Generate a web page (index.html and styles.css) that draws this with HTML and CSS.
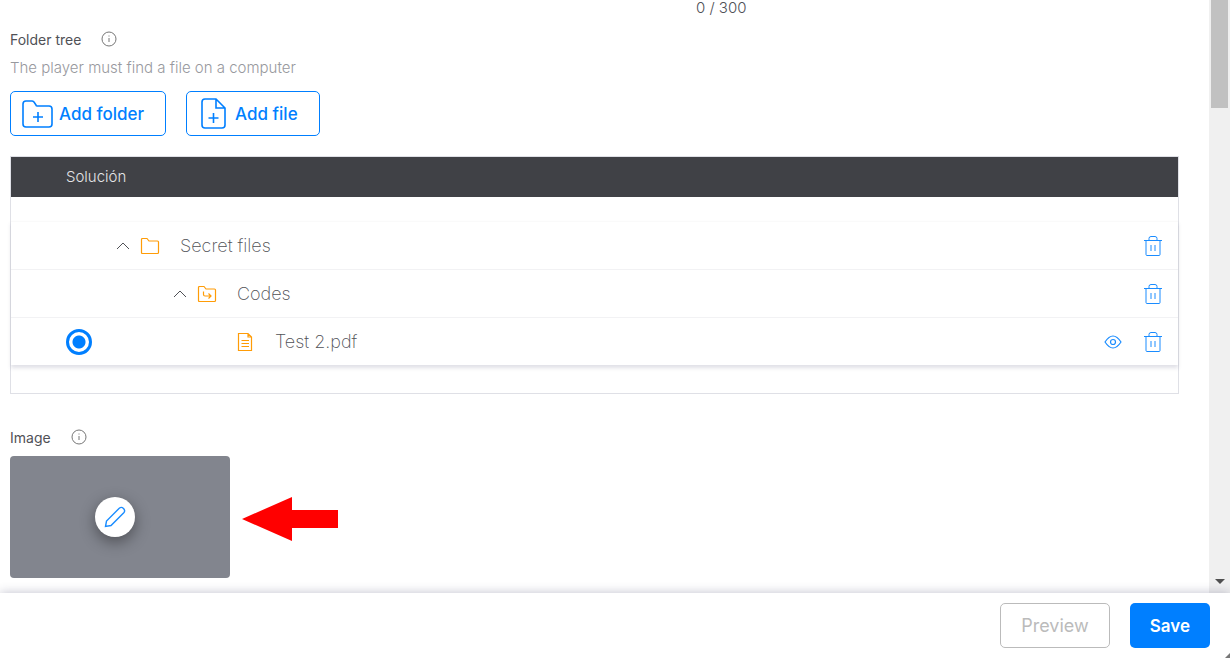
FILE: index.html
```html
<!DOCTYPE html>
<html lang="en">
<head>
  <meta charset="UTF-8">
  <title>Folder tree</title>
  <link rel="stylesheet" href="styles.css">
</head>
<body>

<svg class="sprite" aria-hidden="true">
  <symbol id="icon-info" viewBox="0 0 16 16">
    <circle cx="8" cy="8" r="7"/>
    <path d="M8 7v4M8 4.500v1"/>
  </symbol>
  <symbol id="icon-trash" viewBox="0 0 20 22">
    <path d="M1 5.500h18M3 5.500v14q0 1 1 1h12q1 0 1-1v-14M6 5V3.500q0-2 2-2h4q2 0 2 2V5M8 10v6M12 10v6"/>
  </symbol>
  <symbol id="icon-up" viewBox="0 0 14 8">
    <path d="M1 7l6-6 6 6"/>
  </symbol>
</svg>

<main class="editor">
  <div class="content">
    <div class="counter">0 / 300</div>

    <div class="field-title">
      <span>Folder tree</span>
      <svg class="info"><use href="#icon-info"/></svg>
    </div>
    <p class="hint">The player must find a file on a computer</p>

    <div class="tools">
      <button type="button" class="btn btn-outline">
        <svg class="btn-icon" viewBox="0 0 32 32">
          <path d="M1 6q0-3 3-3h6q1 0 2 1l2 3q0 1 1 1h12q3 0 3 3v15q0 3-3 3H4q-3 0-3-3zM16 14v10M11 19h10"/>
        </svg>
        Add folder
      </button>
      <button type="button" class="btn btn-outline">
        <svg class="btn-icon" viewBox="0 0 32 32">
          <path d="M7 1h11l9 9v17q0 3-3 3H7q-3 0-3-3V4q0-3 3-3zM18 1v9h9M15.500 15v10M10.500 20h10"/>
        </svg>
        Add file
      </button>
    </div>

    <section class="tree">
      <div class="tree-head">Solución</div>
      <ul class="tree-list">
        <li class="tree-row level-1">
          <button type="button" class="icon-btn toggle" aria-label="Collapse Secret files"><svg class="chevron"><use href="#icon-up"/></svg></button>
          <svg class="node-icon" viewBox="0 0 20 20">
            <path d="M1.500 3.500q0-1 1-1h4.500l2 2.500h8.500q1 0 1 1v10.500q0 1-1 1h-15q-1 0-1-1z"/>
          </svg>
          <span class="name">Secret files</span>
          <button type="button" class="icon-btn" aria-label="Delete Secret files"><svg class="trash"><use href="#icon-trash"/></svg></button>
        </li>
        <li class="tree-row level-2">
          <button type="button" class="icon-btn toggle" aria-label="Collapse Codes"><svg class="chevron"><use href="#icon-up"/></svg></button>
          <svg class="node-icon" viewBox="0 0 20 20">
            <path d="M1.500 3.500q0-1 1-1h4.500l2 2.500h8.500q1 0 1 1v10.500q0 1-1 1h-15q-1 0-1-1zM6.500 7.500v3q0 1.500 1.500 1.500h6M11.500 9.500l2.500 2.500-2.500 2.500"/>
          </svg>
          <span class="name">Codes</span>
          <button type="button" class="icon-btn" aria-label="Delete Codes"><svg class="trash"><use href="#icon-trash"/></svg></button>
        </li>
        <li class="tree-row level-3">
          <input type="radio" class="solution" name="solution" id="test2" checked>
          <svg class="node-icon" viewBox="0 0 20 20">
            <path d="M3.500 1.500h9.500l3.500 3.500v13.500h-13zM13 1.500v3.500h3.500M6.500 8.500h7.500M6.500 11.500h7.500M6.500 14.500h7.500"/>
          </svg>
          <label class="name" for="test2">Test 2.pdf</label>
          <button type="button" class="icon-btn" aria-label="View Test 2.pdf">
            <svg class="eye" viewBox="0 0 18 14">
              <path d="M1 7q8-12 16 0q-8 12-16 0z"/>
              <circle cx="9" cy="7" r="2.500"/>
            </svg>
          </button>
          <button type="button" class="icon-btn" aria-label="Delete Test 2.pdf"><svg class="trash"><use href="#icon-trash"/></svg></button>
        </li>
      </ul>
    </section>

    <div class="field-title">
      <span>Image</span>
      <svg class="info"><use href="#icon-info"/></svg>
    </div>
    <div class="image-row">
      <div class="image-box">
        <button type="button" class="edit" aria-label="Edit image">
          <svg class="pencil" viewBox="0 0 22 22">
            <path d="M1.500 20.500l1-5.500L15.500 2q2-1.500 4 .5t.5 4L7 19.500z"/>
          </svg>
        </button>
      </div>
      <svg class="arrow" viewBox="0 0 96 48">
        <path d="M0 26L50 4v13h46v18H50v13z"/>
      </svg>
    </div>
  </div>

  <div class="scrollbar">
    <div class="thumb"></div>
    <svg class="scroll-down" viewBox="0 0 10 5"><path d="M0 0h10L5 5z"/></svg>
  </div>
</main>

<footer class="actions">
  <button type="button" class="btn btn-preview">Preview</button>
  <button type="button" class="btn btn-save">Save</button>
  <svg class="grip" viewBox="0 0 5 5"><path d="M5 0v5H0z"/></svg>
</footer>

</body>
</html>
```
FILE: styles.css
```css
* {
  box-sizing: border-box;
}

body {
  margin: 0;
  height: 100vh;
  display: flex;
  flex-direction: column;
  overflow: hidden;
  background: white;
  color: #505156;
  font-family: Inter, sans-serif;
}

svg {
  display: block;
  flex: none;
  fill: none;
  stroke: currentColor;
}

.sprite {
  position: absolute;
  width: 0;
  height: 0;
}

.editor {
  flex: 1;
  min-height: 0;
  display: flex;
}

.content {
  flex: 1;
  padding: 0 30px 0 10px;
  overflow: hidden;
}

.counter {
  width: 63%;
  line-height: 16px;
  font-size: 15px;
  font-weight: 300;
  text-align: right;
}

.field-title {
  display: flex;
  align-items: center;
  gap: 20px;
  height: 20px;
  margin-top: 13px;
  font-size: 14px;
}

.info {
  width: 16px;
  height: 16px;
  color: #777;
}

.hint {
  margin: 9px 0 13px;
  line-height: 20px;
  font-size: 15px;
  font-weight: 300;
  color: #98999e;
}

.tools {
  display: flex;
  gap: 20px;
}

.btn {
  display: flex;
  align-items: center;
  height: 45px;
  border-radius: 5px;
  font-family: inherit;
  font-size: 17px;
  font-weight: 500;
  cursor: pointer;
}

.btn-outline {
  gap: 5px;
  padding: 0 21px 0 11px;
  border: 1px solid #007fff;
  background: white;
  color: #007fff;
}

.btn-icon {
  width: 32px;
  height: 32px;
  stroke-width: 1.6;
}

.tree {
  margin-top: 20px;
  padding-bottom: 28px;
  border: 1px solid #dfe0e6;
}

.tree-head {
  padding-left: 55px;
  line-height: 40px;
  background: #404146;
  color: #e4e4e6;
  font-size: 15px;
  font-weight: 300;
}

.tree-list {
  margin: 24px 0 0;
  padding: 0;
  list-style: none;
  box-shadow: 0 3px 4px rgba(60, 60, 100, 0.16);
}

.tree-row {
  display: flex;
  align-items: center;
  height: 48px;
  padding-right: 15px;
  border-top: 1px solid #f2f2f4;
}

.tree-row:first-child {
  border-color: #fafafa;
}

.level-1 {
  padding-left: 105px;
}

.level-2 {
  padding-left: 162px;
}

.level-3 {
  padding-left: 55px;
}

.icon-btn {
  padding: 0;
  border: 0;
  background: none;
  color: #1a8cff;
  cursor: pointer;
}

.icon-btn + .icon-btn {
  margin-left: 21px;
}

.toggle {
  margin-right: 10px;
  color: #505156;
}

.chevron {
  width: 14px;
  height: 8px;
}

.node-icon {
  width: 20px;
  height: 20px;
  color: #ff9c07;
  stroke-width: 1.2;
}

.name {
  flex: 1;
  margin-left: 20px;
  font-size: 18px;
  font-weight: 200;
}

.solution {
  appearance: none;
  width: 26px;
  height: 26px;
  margin: 0 143px 0 0;
  border: 3px solid #007fff;
  border-radius: 50%;
  background: radial-gradient(circle, #007fff 6px, white 7px);
}

.trash {
  width: 20px;
  height: 22px;
}

.eye {
  width: 18px;
  height: 14px;
  stroke-width: 1.2;
}

.tree + .field-title {
  margin-top: 33px;
}

.image-row {
  display: flex;
  align-items: center;
  gap: 12px;
  margin-top: 9px;
}

.image-box {
  display: flex;
  align-items: center;
  justify-content: center;
  width: 220px;
  height: 122px;
  padding-right: 10px;
  border-radius: 4px;
  background: #82858e;
}

.edit {
  display: flex;
  align-items: center;
  justify-content: center;
  width: 40px;
  height: 40px;
  padding: 0;
  border: 0;
  border-radius: 50%;
  background: white;
  box-shadow: 0 5px 15px rgba(0, 0, 0, 0.4);
  color: #1a8cff;
  cursor: pointer;
}

.pencil {
  width: 22px;
  height: 22px;
  stroke-width: 1.4;
}

.arrow {
  width: 96px;
  height: 48px;
  fill: red;
  stroke: none;
}

.scrollbar {
  display: flex;
  flex-direction: column;
  justify-content: space-between;
  align-items: center;
  width: 21px;
  padding-bottom: 9px;
  background: #f0f0f0;
}

.thumb {
  width: 17px;
  height: 108px;
  background: #c1c1c1;
}

.scroll-down {
  width: 10px;
  height: 5px;
  fill: #505050;
  stroke: none;
}

.actions {
  position: relative;
  display: flex;
  justify-content: flex-end;
  gap: 20px;
  padding: 10px 20px;
  background: white;
  box-shadow: 0 0 10px rgba(50, 50, 90, 0.3);
}

.btn-preview {
  padding: 0 20px;
  border: 1px solid #bbb;
  background: white;
  color: #bbb;
  font-size: 18px;
  font-weight: 400;
}

.btn-save {
  padding: 0 20px;
  border: 0;
  background: #007fff;
  color: white;
  font-weight: 600;
}

.grip {
  position: absolute;
  right: 0;
  bottom: 0;
  width: 5px;
  height: 5px;
  fill: #777;
  stroke: none;
}
```
